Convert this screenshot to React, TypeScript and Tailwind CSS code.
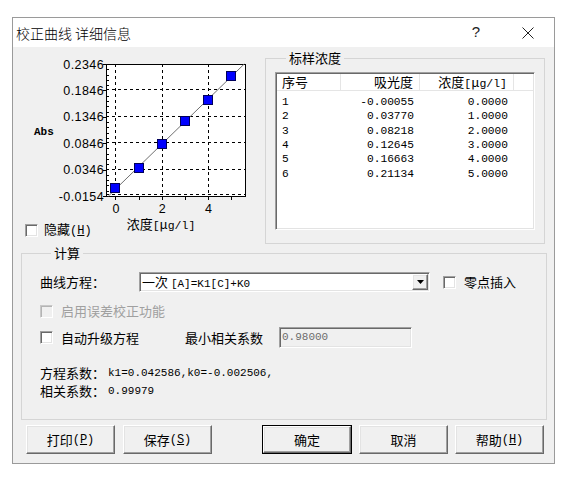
import React from 'react';

const cjk = "font-['Noto_Sans_CJK_SC',sans-serif]";
const mono = "font-['Liberation_Mono',monospace]";
const sunken =
  'border border-t-[#a0a0a0] border-l-[#a0a0a0] border-r-white border-b-white shadow-[inset_1px_1px_0_#696969,inset_-1px_-1px_0_#e3e3e3]';
const raised =
  'border border-t-white border-l-white border-r-[#696969] border-b-[#696969] shadow-[inset_-1px_-1px_0_#a0a0a0,inset_1px_1px_0_#e3e3e3] bg-[#f0f0f0]';

const rows = [
  ['1', '-0.00055', '0.0000'],
  ['2', '0.03770', '1.0000'],
  ['3', '0.08218', '2.0000'],
  ['4', '0.12645', '3.0000'],
  ['5', '0.16663', '4.0000'],
  ['6', '0.21134', '5.0000'],
];

function Check({ disabled }: { disabled?: boolean }) {
  return (
    <span
      className={
        disabled
          ? 'inline-block w-[13px] h-[13px] shrink-0 border border-t-[#c8c8c8] border-l-[#c8c8c8] border-r-white border-b-white shadow-[inset_1px_1px_0_#b4b4b4] bg-[#f0f0f0]'
          : 'inline-block w-[13px] h-[13px] shrink-0 border border-t-[#a0a0a0] border-l-[#a0a0a0] border-r-white border-b-white shadow-[inset_1px_1px_0_#696969,inset_-1px_-1px_0_#e3e3e3] bg-white'
      }
    />
  );
}

function Chart() {
  const X0 = 93, X1 = 232, Y0 = 13, Y1 = 145;
  const xmin = -0.41, xmax = 5.6, ymin = -0.0154, ymax = 0.2346;
  const sx = (v: number) => X0 + ((v - xmin) / (xmax - xmin)) * (X1 - X0);
  const sy = (v: number) => Y1 - ((v - ymin) / (ymax - ymin)) * (Y1 - Y0);
  const yTicks = [0.2346, 0.1846, 0.1346, 0.0846, 0.0346, -0.0154];
  const step = (Y1 - Y0) / 5;
  const minor: number[] = [];
  for (let i = 0; i < 25; i++) if (i % 5) minor.push(Y0 + (i * step) / 5);
  const f = (x: number) => 0.042586 * x - 0.002506;
  const xa = (ymin + 0.002506) / 0.042586;
  const xb = (ymax + 0.002506) / 0.042586;

  return (
    <svg width={250} height={166} className="block" shapeRendering="crispEdges">
      <rect x={X0 + 0.5} y={Y0 + 0.5} width={X1 - X0} height={Y1 - Y0} fill="#fff" stroke="#000" />
      {yTicks.slice(1).map((v) => {
        const y = Math.round(sy(v)) - (v === ymin ? 1.5 : 0.5);
        return <line key={v} x1={X0} x2={X1} y1={y} y2={y} stroke="#000" strokeDasharray="3 3" />;
      })}
      {[0, 2, 4].map((v) => {
        const x = Math.round(sx(v)) + 0.5;
        return <line key={v} x1={x} x2={x} y1={Y0} y2={Y1} stroke="#000" strokeDasharray="3 3" />;
      })}
      {minor.map((y) => (
        <line key={y} x1={X0} x2={X0 + 3} y1={Math.round(y) + 0.5} y2={Math.round(y) + 0.5} stroke="#000" />
      ))}
      {yTicks.map((v) => (
        <line key={'t' + v} x1={X0 - 3} x2={X0} y1={Math.round(sy(v)) + 0.5} y2={Math.round(sy(v)) + 0.5} stroke="#000" />
      ))}
      {[0, 1, 2, 3, 4, 5].map((v) => (
        <line key={'b' + v} x1={Math.round(sx(v)) + 0.5} x2={Math.round(sx(v)) + 0.5} y1={Y1} y2={Y1 + 4} stroke="#000" />
      ))}
      <line
        x1={sx(xa)}
        y1={sy(f(xa))}
        x2={sx(xb)}
        y2={sy(f(xb))}
        stroke="#707070"
        shapeRendering="geometricPrecision"
      />
      {rows.map(([, a, c]) => (
        <rect
          key={c}
          x={Math.round(sx(parseFloat(c))) - 4.5}
          y={Math.round(sy(parseFloat(a))) - 4.5}
          width={9}
          height={9}
          fill="#0000ff"
          stroke="#00005a"
        />
      ))}
      <g fontFamily="'Liberation Sans', Arial, sans-serif" fontSize="12.5" fill="#000" letterSpacing="0.4">
        {yTicks.map((v) => (
          <text key={'l' + v} x={X0 - 2} y={sy(v) + 4.5} textAnchor="end">
            {v.toFixed(4)}
          </text>
        ))}
        {[0, 2, 4].map((v) => (
          <text key={'x' + v} x={sx(v) + 0.5} y={162} textAnchor="middle" letterSpacing="0">
            {v}
          </text>
        ))}
      </g>
      <text x={21} y={84} fontFamily="'Liberation Mono', monospace" fontSize="11" fontWeight="bold" fill="#000">
        Abs
      </text>
    </svg>
  );
}

function Btn({ label, mn, primary }: { label: string; mn?: string; primary?: boolean }) {
  const inner = (
    <div className={`${raised} h-full w-full flex items-center justify-center text-[13px] text-black ${cjk}`}>
      <span>{label}</span>
      {mn && (
        <span className={`${mono} text-[12px]`}>
          (<u>{mn}</u>)
        </span>
      )}
    </div>
  );
  return primary ? (
    <div className="w-[90px] h-[29px] border border-black">{inner}</div>
  ) : (
    <div className="w-[89px] h-[29px]">{inner}</div>
  );
}

export default function App() {
  return (
    <div className="w-[562px] h-[481px] bg-white pt-[17px] pl-[12px]">
      <div className="w-[543px] h-[447px] border border-[#9a9a9a] flex flex-col bg-[#f0f0f0]">
        {/* title bar */}
        <div className="h-[29px] bg-white flex items-center pl-[3px] pr-[16px] shrink-0">
          <span className={`${cjk} text-[14px] font-light text-black leading-none`}>校正曲线 详细信息</span>
          <div className="flex-1" />
          <span className="w-[20px] text-center text-[15px] text-[#222] font-['Liberation_Sans',sans-serif]">?</span>
          <div className="w-[32px]" />
          <svg width={20} height={12} viewBox="0 0 20 12" className="block">
            <path d="M4.5 0.5 L15.5 11.5 M15.5 0.5 L4.5 11.5" stroke="#222" strokeWidth="1" />
          </svg>
        </div>

        {/* content */}
        <div className="flex-1 flex flex-col">
          <div className="flex h-[197px]">
            <div className="w-[252px] flex flex-col pt-[4px]">
              <Chart />
              <div className="flex items-start">
                <div className="flex items-center ml-[12px] mt-[5px] gap-[6px]">
                  <Check />
                  <span className={`${cjk} text-[13px] leading-[14px]`}>
                    隐藏<span className={`${mono} text-[12px]`}>(<u>H</u>)</span>
                  </span>
                </div>
                <span className={`ml-[35px] text-[13px] leading-[14px] ${cjk}`}>
                  浓度<span className={`${mono} text-[11.5px]`}>[</span>μ<span className={`${mono} text-[11.5px]`}>g/l]</span>
                </span>
              </div>
            </div>
            <fieldset className="mt-[3px] w-[280px] h-[194px] border border-[#d5d5d5] pl-[9px] pt-[6px]">
              <legend className={`ml-[11px] px-[3px] text-[13px] leading-[16px] ${cjk}`}>标样浓度</legend>
              <div className={`w-[260px] h-[158px] ${sunken} bg-white p-px`}>
                <div className={`flex h-[17px] border-b border-[#e5e5e5] text-[13px] leading-[16px] ${cjk}`}>
                  <div className="w-[64px] border-r border-[#e5e5e5] pl-[5px]">序号</div>
                  <div className="w-[79px] border-r border-[#e5e5e5] pr-[6px] text-right">吸光度</div>
                  <div className="w-[94px] border-r border-[#e5e5e5] pr-[6px] text-right">
                    浓度<span className={`${mono} text-[11.5px]`}>[</span>μ<span className={`${mono} text-[11.5px]`}>g/l]</span>
                  </div>
                  <div className="flex-1" />
                </div>
                <div className={`pt-[4px] ${mono} text-[11.2px] text-black`}>
                  {rows.map(([n, a, c]) => (
                    <div key={n} className="flex h-[14.4px] items-center">
                      <div className="w-[64px] pl-[5px]">{n}</div>
                      <div className="w-[79px] pr-[6px] text-right">{a}</div>
                      <div className="w-[94px] pr-[6px] text-right">{c}</div>
                    </div>
                  ))}
                </div>
              </div>
            </fieldset>
          </div>

          {/* 计算 */}
          <fieldset className="ml-[8px] mt-[1px] w-[526px] h-[175px] border border-[#d5d5d5] pl-[18px] pt-[11px]">
            <legend className={`ml-[11px] px-[3px] text-[13px] leading-[16px] ${cjk}`}>计算</legend>
            <div className="flex items-center h-[20px]">
              <span className={`w-[99px] text-[13px] ${cjk}`}>曲线方程：</span>
              <div className={`w-[291px] h-[20px] ${sunken} bg-white flex items-center`}>
                <span className={`flex-1 pl-[2px] text-[13px] leading-none ${cjk}`}>
                  一次 <span className={`${mono} text-[11px]`}>[A]=K1[C]+K0</span>
                </span>
                <div className={`w-[16px] h-[16px] mr-px ${raised} flex items-center justify-center`}>
                  <svg width={7} height={4} viewBox="0 0 7 4" className="block">
                    <path d="M0 0 H7 L3.5 4 Z" fill="#000" />
                  </svg>
                </div>
              </div>
              <div className="flex items-center ml-[13px] gap-[8px]">
                <Check />
                <span className={`text-[13px] ${cjk}`}>零点插入</span>
              </div>
            </div>
            <div className="flex items-center h-[16px] mt-[11px] gap-[8px]">
              <Check disabled />
              <span className={`text-[13px] text-[#a0a0a0] ${cjk}`}>启用误差校正功能</span>
            </div>
            <div className="flex items-center h-[21px] mt-[8px]">
              <div className="flex items-center gap-[8px] w-[145px]">
                <Check />
                <span className={`text-[13px] ${cjk}`}>自动升级方程</span>
              </div>
              <span className={`w-[94px] text-[13px] ${cjk}`}>最小相关系数</span>
              <div className={`w-[133px] h-[21px] ${sunken} bg-[#f0f0f0] flex items-center pl-[2px]`}>
                <span className={`${mono} text-[11px] text-[#6d6d6d]`}>0.98000</span>
              </div>
            </div>
            <div className={`mt-[16px] h-[18px] flex items-center text-[13px] ${cjk}`}>
              方程系数：<span className={`${mono} text-[11px] ml-[3px]`}>k1=0.042586,k0=-0.002506,</span>
            </div>
            <div className={`h-[18px] flex items-center text-[13px] ${cjk}`}>
              相关系数：<span className={`${mono} text-[11px] ml-[3px]`}>0.99979</span>
            </div>
          </fieldset>

          {/* buttons */}
          <div className="flex mt-[5px] pl-[13px]">
            <Btn label="打印" mn="P" />
            <div className="w-[8px]" />
            <Btn label="保存" mn="S" />
            <div className="w-[50px]" />
            <Btn label="确定" primary />
            <div className="w-[7px]" />
            <Btn label="取消" />
            <div className="w-[7px]" />
            <Btn label="帮助" mn="H" />
          </div>
        </div>
      </div>
    </div>
  );
}
